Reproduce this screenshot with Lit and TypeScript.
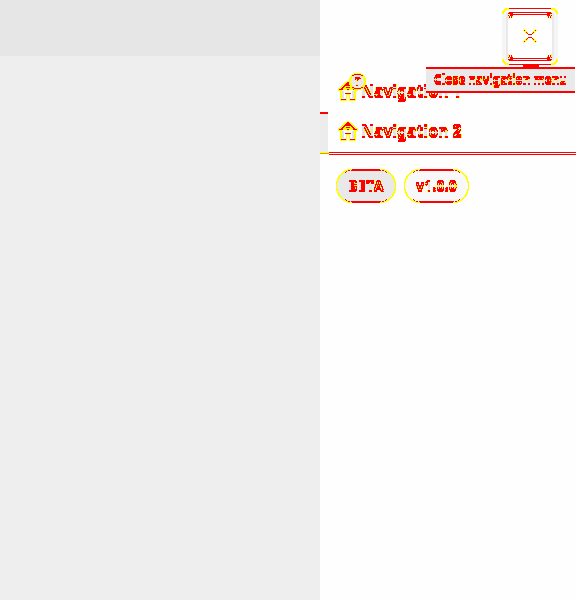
import { LitElement, html, css, svg } from "lit";
import { customElement } from "lit/decorators.js";

const house = html`<svg class="house" width="20" height="20" viewBox="0 0 20 20" shape-rendering="crispEdges">
  <path d="M9 0H11V1H13V2H14V3H15V4H16V5H17V6H18V7H20V10H18V20H11V14H9V20H2V10H0V7H2V6H3V5H4V4H5V3H6V2H7V1H9Z" fill="#ff0" />
  <path d="M4 9H16V18H12V13H8V18H4Z" fill="#fefefe" />
  <path d="M4 10H6V17H4ZM14 10H16V17H14Z" fill="#e3e3e3" />
  <path d="M9 1H11V2H12V3H13V4H14V5H15V6H16V7H17V8H15V7H14V6H13V5H7V6H6V7H5V8H3V7H4V6H5V5H6V4H7V3H8V2H9Z" fill="red" />
  <path d="M7 6H13V8H12V9H11V10H9V9H8V8H7Z" fill="#ff0" />
  <path d="M9 8H11V9H9ZM8 6H12V7H8ZM1 8H5V9H1ZM15 8H19V9H15ZM7 12H13V13H7ZM3 18H8V19H3ZM12 18H17V19H12Z" fill="red" />
</svg>`;

const corner = svg`<path d="M0 6V3H1V2H2V1H3V0H7V2H4V3H3V4H2V6Z" fill="#ff0" />`;
const tick = svg`<path d="M0 1H1V0H2V1H3V0H5V2H3V3H5V4H4V6H3V4H2V6H1V4H0V3H2V2H0Z" fill="red" /><path d="M0 0H1V1H0ZM4 4H5V5H4ZM1 3H2V4H1ZM0 5H1V7H0Z" fill="#ff0" />`;
const arm = svg`<path d="M0 1H1V0H2V1H3V2H4V3H5V4H4V5H3V4H2V3H1V2H0Z" fill="#ff0" /><path d="M1 1H2V2H1ZM3 3H4V4H3ZM4 4H5V5H4ZM5 5H7V6H5Z" fill="red" />`;

const closeArt = html`<svg width="56" height="59" viewBox="0 0 56 59" shape-rendering="crispEdges">
  <rect width="56" height="57" rx="8" fill="#f5f5f5" />
  <rect x="4" y="5" width="48" height="47" fill="#e9e9e9" />
  <rect x="6" y="1" width="44" height="55" fill="#fefefe" />
  <path d="M7 0H49V1H7ZM8 4H48V5H8ZM9 6H47V7H9ZM9 50H47V51H9ZM8 52H48V53H8ZM5 56H51V57H5ZM21 57H37V59H21Z" fill="red" />
  ${corner}
  <g transform="translate(56 0) scale(-1 1)">${corner}</g>
  <g transform="translate(0 57) scale(1 -1)">${corner}</g>
  <g transform="translate(56 57) scale(-1 -1)">${corner}</g>
  <g transform="translate(6 4)">${tick}</g>
  <g transform="translate(50 4) scale(-1 1)">${tick}</g>
  <g transform="translate(6 53) scale(1 -1)">${tick}</g>
  <g transform="translate(50 53) scale(-1 -1)">${tick}</g>
  <g transform="translate(21 21)">${arm}</g>
  <g transform="translate(35 21) scale(-1 1)">${arm}</g>
  <g transform="translate(21 35) scale(1 -1)">${arm}</g>
  <g transform="translate(35 35) scale(-1 -1)">${arm}</g>
</svg>`;

const pill = (w: number, fill: string) => html`<svg class="shape" width=${w} height="34" viewBox="0 0 ${w} 34" shape-rendering="crispEdges">
  <rect x=".5" y=".5" width=${w - 1} height="33" rx="16.5" fill=${fill} />
  <path d="M16 .5A15.5 16.5 0 0 0 16 33.5M${w - 16} .5A15.5 16.5 0 0 1 ${w - 16} 33.5" fill="none" stroke="#ff0" stroke-width="1.5" />
  <path d="M9 3.5Q12 1.5 16 1.5M9 30.5Q12 32.5 16 32.5M${w - 9} 3.5Q${w - 12} 1.5 ${w - 16} 1.5M${w - 9} 30.5Q${w - 12} 32.5 ${w - 16} 32.5" fill="none" stroke="red" stroke-dasharray="2 1" />
  <path d="M16 0H${w - 16}V2H16ZM16 32H${w - 16}V34H16Z" fill="red" />
</svg>`;

// Colours glyphs by their vertical contrast: strong edges red, faint edges yellow, stems grey.
const edgeFilter = html`<svg class="defs" width="0" height="0">
  <filter id="edges" x="-5%" y="-20%" width="110%" height="140%" color-interpolation-filters="sRGB">
    <feConvolveMatrix in="SourceAlpha" order="3" kernelMatrix="0 1 0 0 0 0 0 -1 0" divisor="1" preserveAlpha="false" result="down" />
    <feConvolveMatrix in="SourceAlpha" order="3" kernelMatrix="0 -1 0 0 0 0 0 1 0" divisor="1" preserveAlpha="false" result="up" />
    <feMerge result="edge"><feMergeNode in="down" /><feMergeNode in="up" /></feMerge>
    <feColorMatrix in="SourceAlpha" values="0 0 0 0 .89  0 0 0 0 .89  0 0 0 0 .89  0 0 0 12 -3" result="stem" />
    <feColorMatrix in="edge" values="0 0 0 0 1  0 0 0 0 1  0 0 0 0 0  0 0 0 40 -1" result="faint" />
    <feColorMatrix in="edge" values="0 0 0 0 1  0 0 0 0 0  0 0 0 0 0  0 0 0 30 -5" result="strong" />
    <feMerge><feMergeNode in="stem" /><feMergeNode in="faint" /><feMergeNode in="strong" /></feMerge>
  </filter>
</svg>`;

@customElement("app-root")
export class AppRoot extends LitElement {
  static styles = css`
    :host { display: block; width: 576px; height: 600px; overflow: hidden; background: #fefefe; font-family: "Noto Sans", sans-serif; color: red; }
    .page { display: grid; grid-template-columns: 320px 256px; height: 600px; }
    .defs { position: absolute; }
    .backdrop { display: grid; grid-template-rows: 56px 1fr; background: #eee; }
    .bar { background: #e6e6e6; }
    .drawer { position: relative; }
    header { height: 72px; box-sizing: border-box; padding: 8px 18px 0 0; display: flex; justify-content: flex-end; }
    header svg { display: block; }
    .item { height: 40px; box-sizing: border-box; padding: 0 0 2px 18px; display: flex; align-items: center; position: relative; }
    .active { border-left: 8px solid #ececec; padding-left: 10px; height: 42px; padding-bottom: 4px; }
    .active::before { content: ""; position: absolute; left: -8px; top: 0; width: 8px; height: 2px; background: red; }
    .active::after { content: ""; position: absolute; left: -8px; bottom: 0; width: 9px; height: 2px; box-sizing: border-box; border-top: 1px solid #ff0; background: #e0a000; }
    .text { white-space: nowrap; filter: url(#edges); }
    .label { margin-left: 3px; font-size: 16px; font-weight: 700; line-height: 20px; letter-spacing: -.1px; }
    .house { display: block; }
    .badge { position: absolute; left: 29px; top: 1px; }
    .rule { height: 1px; margin: -2px 0 0 9px; border-top: 1px solid red; border-bottom: 1px solid red; position: relative; }
    .chips { display: flex; gap: 8px; padding: 14px 16px; }
    .chip { height: 34px; display: flex; align-items: center; justify-content: center; position: relative; font-size: 14px; font-weight: 700; padding-bottom: 2px; box-sizing: border-box; }
    .beta { width: 60px; letter-spacing: .4px; }
    .version { width: 65px; letter-spacing: .2px; }
    .shape { position: absolute; inset: 0; }
    .chip .text { position: relative; }
    .tooltip { position: absolute; left: 106px; top: 67px; width: 149px; height: 26px; box-sizing: border-box; border: solid red; border-width: 2px 0; background: #e9e9e9; display: flex; align-items: center; justify-content: center; font-size: 12px; font-weight: 600; padding-bottom: 2px; letter-spacing: -.05px; }
  `;

  render() {
    return html`${edgeFilter}<div class="page">
      <div class="backdrop"><div class="bar"></div></div>
      <aside class="drawer">
        <header>${closeArt}</header>
        <nav>
          <div class="item">${house}<span class="text label">Navigation 1</span>
            <svg class="badge" width="17" height="17" viewBox="0 0 17 17" shape-rendering="crispEdges">
              <path d="M5 0H12V1H14V2H15V3H16V5H17V12H16V14H15V15H14V16H12V17H5V16H3V15H2V14H1V12H0V5H1V3H2V2H3V1H5Z" fill="#ff0" />
              <path d="M6 2H11V3H13V4H14V6H15V11H14V13H13V14H11V15H6V14H4V13H3V11H2V6H3V4H4V3H6Z" fill="#e9e9e9" />
              <path d="M5 1H12V2H5ZM3 2H5V3H3ZM12 2H14V3H12ZM6 4H11V5H12V6H10V7H8V6H7V7H6ZM8 7H9V8H8ZM7 12H9V13H7ZM5 15H12V16H5ZM3 14H5V15H3ZM12 14H14V15H12Z" fill="red" />
              <path d="M7 7H8V9H7ZM10 6H11V7H10ZM7 11H8V12H7Z" fill="#ff0" />
            </svg>
          </div>
          <div class="item active">${house}<span class="text label">Navigation 2</span></div>
        </nav>
        <div class="rule"></div>
        <div class="chips">
          <div class="chip beta">${pill(60, "#e9e9e9")}<span class="text">BETA</span></div>
          <div class="chip version">${pill(65, "#f8f8f8")}<span class="text">v1.0.0</span></div>
        </div>
        <div class="tooltip"><span class="text">Close navigation menu</span></div>
      </aside>
    </div>`;
  }
}
